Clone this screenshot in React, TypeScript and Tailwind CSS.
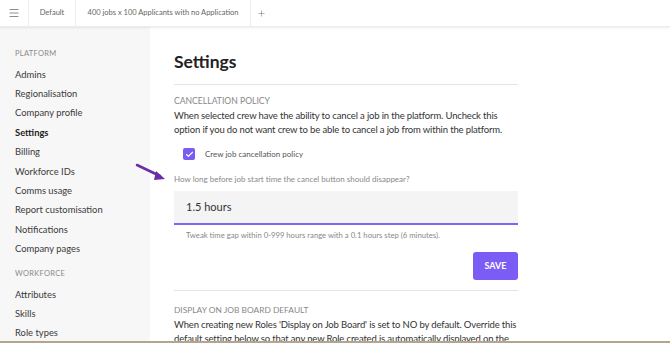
import { Menu, Plus, Check } from 'lucide-react'

const platformItems = [
  'Admins',
  'Regionalisation',
  'Company profile',
  'Settings',
  'Billing',
  'Workforce IDs',
  'Comms usage',
  'Report customisation',
  'Notifications',
  'Company pages',
]

const workforceItems = ['Attributes', 'Skills', 'Role types']

function SideItem({ label, active = false }: { label: string; active?: boolean }) {
  return (
    <div
      className={`h-[19.4px] flex items-center text-[9.4px] ${
        active ? 'font-bold text-[#222]' : 'text-[#3a3a3a]'
      }`}
    >
      {label}
    </div>
  )
}

function Sidebar() {
  return (
    <aside className="w-[150px] shrink-0 bg-[#f7f7f7] pl-[15px] pt-[20px]">
      <div className="h-[14px] flex items-center text-[7.5px] tracking-[0.3px] text-[#8a8a8a]">PLATFORM</div>
      <div className="mt-[4px]">
        {platformItems.map((item) => (
          <SideItem key={item} label={item} active={item === 'Settings'} />
        ))}
      </div>
      <div className="mt-[8px] h-[14px] flex items-center text-[7.5px] tracking-[0.3px] text-[#8a8a8a]">WORKFORCE</div>
      <div className="mt-[4px]">
        {workforceItems.map((item) => (
          <SideItem key={item} label={item} />
        ))}
      </div>
    </aside>
  )
}

function TopBar() {
  return (
    <header className="h-[27px] shrink-0 flex items-stretch bg-white shadow-[0_1px_2px_rgba(0,0,0,0.08)] border-b border-[#ececec] relative z-10">
      <div className="w-[28px] flex items-center justify-center">
        <Menu className="w-[12px] h-[12px] text-[#666]" strokeWidth={1.5} />
      </div>
      <div className="w-[48px] flex items-center justify-center border-l border-r border-[#eeeeee] text-[7.5px] text-[#666]">
        Default
      </div>
      <div className="w-[175px] flex items-center justify-center border-r border-[#eeeeee] text-[7.5px] text-[#666]">
        400 jobs x 100 Applicants with no Application
      </div>
      <div className="flex items-center pl-[6px]">
        <Plus className="w-[9px] h-[9px] text-[#777]" strokeWidth={1.5} />
      </div>
    </header>
  )
}

function Main() {
  return (
    <main className="flex-1 bg-white pl-[24px] pt-[22px]">
      <div className="w-[344px]">
        <h1 className="text-[17.5px] font-bold text-[#222] leading-[26px]">Settings</h1>
        <div className="mt-[9px] h-px bg-[#e4e4e4]" />

        <div className="mt-[9px] text-[8.6px] text-[#888] leading-[14px]">CANCELLATION POLICY</div>
        <p className="mt-[1px] text-[9.5px] tracking-[-0.15px] text-[#333] leading-[14px] whitespace-nowrap">
          When selected crew have the ability to cancel a job in the platform. Uncheck this
          <br />
          option if you do not want crew to be able to cancel a job from within the platform.
        </p>

        <div className="mt-[10px] flex items-center pl-[9px] h-[14px]">
          <div className="w-[12px] h-[12px] rounded-[2px] bg-[#7b5cf0] flex items-center justify-center">
            <Check className="w-[9px] h-[9px] text-white" strokeWidth={3} />
          </div>
          <span className="ml-[10px] text-[8px] text-[#555]">Crew job cancellation policy</span>
        </div>

        <div className="mt-[12px] text-[8px] text-[#888] leading-[12px]">
          How long before job start time the cancel button should disappear?
        </div>

        <div className="mt-[6px] h-[34px] bg-[#f4f4f4] border-b-2 border-[#7b68ee] flex items-center pl-[12px] text-[11px] text-[#333]">
          1.5 hours
        </div>
        <div className="mt-[4px] pl-[12px] text-[7.7px] text-[#888] leading-[12px]">
          Tweak time gap within 0-999 hours range with a 0.1 hours step (6 minutes).
        </div>

        <div className="mt-[11px] flex justify-end">
          <button className="w-[45px] h-[28px] rounded-[3px] bg-[#7b5cf5] text-white text-[9px] font-bold">
            SAVE
          </button>
        </div>
        <div className="mt-[10px] h-px bg-[#e4e4e4]" />

        <div className="mt-[12px] text-[8.4px] text-[#888] leading-[14px]">DISPLAY ON JOB BOARD DEFAULT</div>
        <p className="mt-[1px] text-[9.5px] tracking-[-0.15px] text-[#333] leading-[14px] whitespace-nowrap">
          When creating new Roles 'Display on Job Board' is set to NO by default. Override this
          <br />
          default setting below so that any new Role created is automatically displayed on the
          <br />
          Job Board.
        </p>
      </div>
    </main>
  )
}

function Arrow() {
  return (
    <svg className="absolute left-[130px] top-[158px]" width="40" height="26" viewBox="0 0 40 26">
      <line x1="7" y1="7" x2="30" y2="18" stroke="#6a2fa5" strokeWidth="2.5" strokeLinecap="round" />
      <path d="M26 13 L35 21 L24 22 Z" fill="#6a2fa5" />
    </svg>
  )
}

export default function App() {
  return (
    <div
      className="relative w-[670px] h-[343px] overflow-hidden flex flex-col bg-white border-b-2 border-[#b4a592]"
      style={{ fontFamily: 'Lato, "Noto Sans", sans-serif' }}
    >
      <TopBar />
      <div className="flex flex-1 min-h-0">
        <Sidebar />
        <Main />
      </div>
      <Arrow />
    </div>
  )
}
